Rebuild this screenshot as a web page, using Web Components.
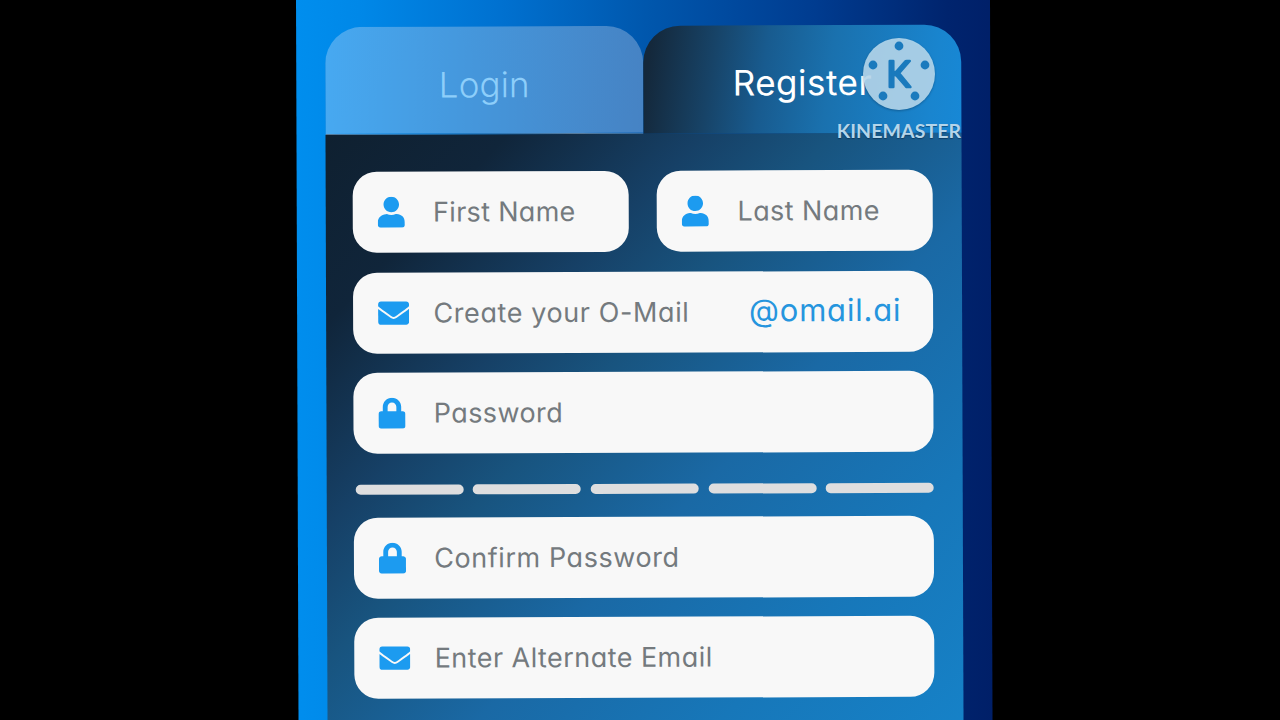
<!DOCTYPE html>
<html lang="en">
<head>
<meta charset="UTF-8">
<title>Register</title>
<style>
    body {
        margin: 0;
        height: 720px;
        overflow: hidden;
        background: #000;
        font-family: Inter, "Noto Sans", sans-serif;
        /* single-storey a */
        font-feature-settings: "cv11";
    }
</style>
</head>
<body>
<app-screen>
    <tab-item slot="tabs" style="--track: 0.1px">Login</tab-item>
    <tab-item slot="tabs" active style="--track: 0.5px">Register</tab-item>
    <form-row>
        <form-field icon="user" style="--track: 0.3px">First Name</form-field>
        <form-field icon="user" style="--track: 0.4px">Last Name</form-field>
    </form-row>
    <form-field icon="envelope" style="--track: 0.6px">Create your O-Mail<span slot="suffix">@omail.ai</span></form-field>
    <form-field icon="lock" style="--track: 0.4px">Password</form-field>
    <strength-meter></strength-meter>
    <form-field icon="lock" style="--track: 0.55px">Confirm Password</form-field>
    <form-field icon="envelope" style="--track: 0.45px">Enter Alternate Email</form-field>
</app-screen>
<brand-mark>KINEMASTER</brand-mark>

<script>
const ICONS = {
    user: [448, 'M224 256c70.7 0 128-57.3 128-128S294.7 0 224 0 96 57.3 96 128s57.3 128 128 128zm89.6 32h-16.7c-22.2 10.2-46.9 16-72.9 16s-50.6-5.8-72.9-16h-16.7C60.2 288 0 348.2 0 422.4V464c0 26.5 21.5 48 48 48h352c26.5 0 48-21.5 48-48v-41.6c0-74.2-60.2-134.4-134.4-134.4z'],
    envelope: [512, 'M502.3 190.8c3.9-3.1 9.7-.2 9.7 4.7V400c0 26.5-21.5 48-48 48H48c-26.5 0-48-21.5-48-48V195.6c0-5 5.7-7.8 9.7-4.7 22.4 17.4 52.1 39.5 154.1 113.6 21.1 15.4 56.7 47.8 92.2 47.6 35.7.3 72-32.8 92.3-47.6 102-74.1 131.6-96.3 154-113.7zM256 320c23.2.4 56.6-29.2 73.4-41.4 132.7-96.3 142.8-104.7 173.4-128.7 5.8-4.5 9.2-11.5 9.2-18.9v-19c0-26.5-21.5-48-48-48H48c-26.5 0-48 21.5-48 48v19c0 7.4 3.4 14.3 9.2 18.9 30.6 23.9 40.7 32.4 173.4 128.7 16.8 12.2 50.2 41.8 73.4 41.4z'],
    lock: [448, 'M400 224h-24v-72C376 68.2 307.8 0 224 0S72 68.2 72 152v72H48c-26.5 0-48 21.5-48 48v192c0 26.5 21.5 48 48 48h352c26.5 0 48-21.5 48-48V272c0-26.5-21.5-48-48-48zm-104 0H152v-72c0-39.7 32.3-72 72-72s72 32.3 72 72v72z']
};

class AppScreen extends HTMLElement {
    connectedCallback() {
        this.attachShadow({ mode: 'open' });
        this.shadowRoot.innerHTML = `
            <style>
                :host {
                    display: block;
                    box-sizing: border-box;
                    width: 694px;
                    height: 730px;
                    margin-left: 296px;
                    padding: 27.4px 28.8px 0;
                    background: linear-gradient(90.5deg, #008eee 0%, #0088e8 9%, #0070cf 30%, #0057ad 50%, #003c90 74%, #00246e 93%, #001f68 100%);
                    transform: rotate(-0.2deg);
                    transform-origin: 0 0;
                }
                .tabs {
                    display: flex;
                    height: 107.6px;
                }
                .panel {
                    box-sizing: border-box;
                    display: flex;
                    flex-direction: column;
                    gap: 19.5px;
                    height: 600px;
                    padding: 37.2px 29px 0 27px;
                    background: linear-gradient(134deg, #0f2030 0%, #10253a 15%, #164066 31%, #18547f 42%, #1a69a5 59%, #1777b9 79%, #1682c8 100%);
                }
            </style>
            <div class="tabs"><slot name="tabs"></slot></div>
            <div class="panel"><slot></slot></div>
        `;
    }
}

class TabItem extends HTMLElement {
    connectedCallback() {
        this.attachShadow({ mode: 'open' });
        this.shadowRoot.innerHTML = `
            <style>
                :host {
                    flex: 1;
                    display: flex;
                    box-sizing: border-box;
                    align-items: center;
                    justify-content: center;
                    padding-top: 8px;
                    border-radius: 37px 37px 0 0;
                    border-bottom: 1px solid #557a9b;
                    background: linear-gradient(91deg, #47a9f1, #4597dc 45%, #4683c4) padding-box;
                    color: #8dcefa;
                    font-size: 35px;
                    font-weight: 300;
                    letter-spacing: var(--track, 0);
                }
                :host([active]) {
                    border-bottom: none;
                    padding-top: 6px;
                    background: linear-gradient(98deg, #14283b 3%, #174367 22%, #185b8f 38%, #1a71ae 58%, #1985cf 90%, #1788d6);
                    color: #fff;
                    font-weight: 400;
                }
            </style>
            <slot></slot>
        `;
    }
}

class FormRow extends HTMLElement {
    connectedCallback() {
        this.attachShadow({ mode: 'open' });
        this.shadowRoot.innerHTML = `
            <style>
                :host {
                    display: grid;
                    grid-template-columns: 1fr 1fr;
                    gap: 28.5px;
                }
            </style>
            <slot></slot>
        `;
    }
}

class FormField extends HTMLElement {
    connectedCallback() {
        const [width, path] = ICONS[this.getAttribute('icon')];
        this.attachShadow({ mode: 'open' });
        this.shadowRoot.innerHTML = `
            <style>
                :host {
                    display: flex;
                    box-sizing: border-box;
                    align-items: center;
                    height: 81px;
                    padding: 0 33px 0 25px;
                    border-radius: 24px;
                    background: #f8f8f8;
                    color: #747a7e;
                    font-size: 27px;
                    font-weight: 400;
                    white-space: nowrap;
                }
                .icon {
                    flex: none;
                    width: 55.5px;
                    display: flex;
                }
                svg {
                    height: 31px;
                    fill: #1c9bf0;
                }
                .label {
                    flex: 1;
                    letter-spacing: var(--track, 0);
                }
                ::slotted([slot="suffix"]) {
                    color: #2595de;
                    font-size: 31px;
                    letter-spacing: 0.8px;
                    margin: -3px -1px 0 0;
                }
            </style>
            <span class="icon"><svg viewBox="0 0 ${width} 512"><path d="${path}"/></svg></span>
            <span class="label"><slot></slot></span>
            <slot name="suffix"></slot>
        `;
    }
}

class StrengthMeter extends HTMLElement {
    connectedCallback() {
        this.attachShadow({ mode: 'open' });
        this.shadowRoot.innerHTML = `
            <style>
                :host {
                    display: grid;
                    grid-template-columns: repeat(5, 1fr);
                    gap: 9.6px;
                    margin: 11.3px 0 3.5px 2px;
                }
                i {
                    height: 9.6px;
                    border-radius: 5px;
                    background: #dededf;
                }
            </style>
            <i></i><i></i><i></i><i></i><i></i>
        `;
    }
}

class BrandMark extends HTMLElement {
    connectedCallback() {
        this.attachShadow({ mode: 'open' });
        this.shadowRoot.innerHTML = `
            <style>
                /* watermark floating over the tab bar */
                :host {
                    position: absolute;
                    left: 837px;
                    top: 37px;
                    width: 124px;
                    display: flex;
                    flex-direction: column;
                    align-items: center;
                    gap: 8px;
                    color: #b4d5ea;
                    font: 700 19.5px/24px Lato, sans-serif;
                    letter-spacing: 0.1px;
                    white-space: nowrap;
                    text-shadow: 0 1px 1px rgba(0, 30, 60, 0.5);
                }
                svg {
                    filter: drop-shadow(0 1px 1px rgba(0, 30, 60, 0.4));
                    text-shadow: none;
                }
                .reel { fill: rgba(190, 222, 241, 0.86); }
                .hole { fill: #1a7abd; }
                text {
                    font: 400 36px Lato, sans-serif;
                    letter-spacing: 0;
                    fill: #1a7abd;
                    stroke: #1a7abd;
                    stroke-width: 2.6px;
                    stroke-linejoin: round;
                }
            </style>
            <svg width="74" height="74" viewBox="-37 -37 74 74">
                <circle class="reel" r="36"/>
                <g class="hole">
                    <circle cy="-28" r="4.4"/>
                    <circle cx="26" cy="-9" r="4.4"/>
                    <circle cx="16" cy="22" r="4.4"/>
                    <circle cx="-16" cy="22" r="4.4"/>
                    <circle cx="-26" cy="-9" r="4.4"/>
                </g>
                <text x="-0.7" y="12.8" text-anchor="middle">K</text>
            </svg>
            <slot></slot>
        `;
    }
}

customElements.define('app-screen', AppScreen);
customElements.define('tab-item', TabItem);
customElements.define('form-row', FormRow);
customElements.define('form-field', FormField);
customElements.define('strength-meter', StrengthMeter);
customElements.define('brand-mark', BrandMark);
</script>
</body>
</html>
